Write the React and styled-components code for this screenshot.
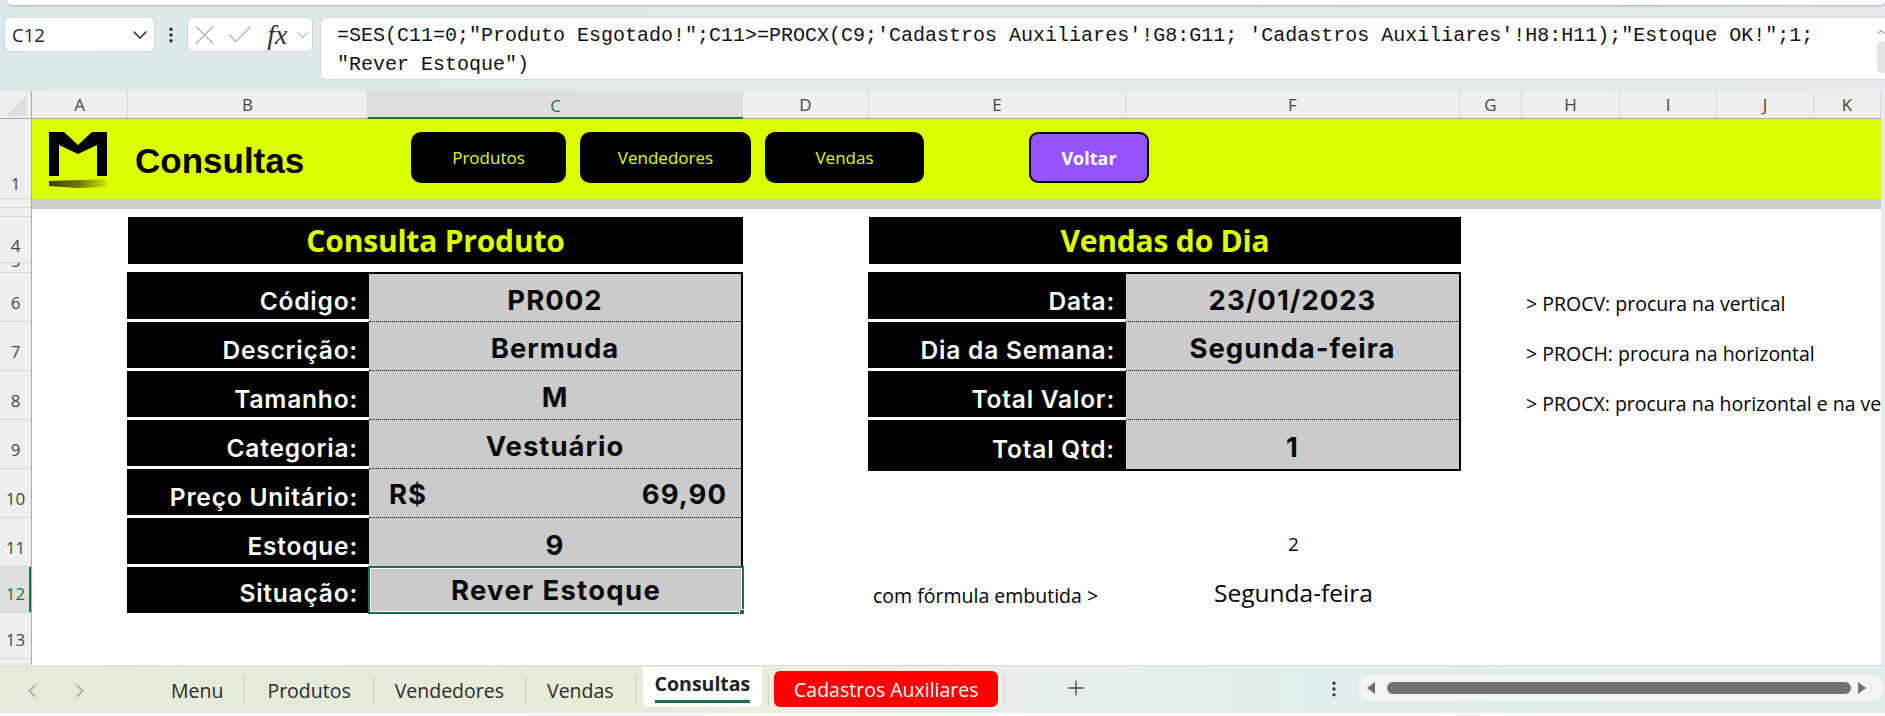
import React from "react";
import styled, { createGlobalStyle } from "styled-components";
import { Check, ChevronDown, ChevronLeft, ChevronRight, ChevronUp, EllipsisVertical, Plus, X } from "lucide-react";

const LIME = "#DCFF00";
const UI_FONT = `"Open Sans", "Noto Sans", sans-serif`;
const DATA_FONT = `Inter, "Open Sans", sans-serif`;
const GREEN = "#1a7244";

const GlobalStyle = createGlobalStyle`
  html, body {
    margin: 0;
    padding: 0;
    background: #fff;
    overflow: hidden;
  }
  * { box-sizing: border-box; }
`;

const Window = styled.div`
  width: 1885px;
  height: 716px;
  display: flex;
  flex-direction: column;
  overflow: hidden;
  font-family: ${UI_FONT};
  background: linear-gradient(90deg, #dce9ea 0%, #e2eaea 60%, #e6ecee 100%);
`;

const RibbonEdge = styled.div`
  height: 5px;
  margin-left: 7px;
  flex: none;
  background: #fff;
  border-radius: 0 0 6px 6px;
  box-shadow: 0 1px 3px rgba(0, 0, 0, 0.25);
`;

const FormulaRow = styled.div`
  display: flex;
  align-items: flex-start;
  height: 86px;
  flex: none;
  padding: 12px 0 0 4px;
`;

const NameBox = styled.div`
  width: 151px;
  height: 35px;
  display: flex;
  align-items: center;
  justify-content: space-between;
  padding: 0 2px 0 7px;
  background: #fff;
  border: 1px solid #d5d8d8;
  border-radius: 6px;
  font-size: 18.5px;
  color: #222;
`;

const DotsSlot = styled.div`
  width: 32px;
  height: 35px;
  display: flex;
  align-items: center;
  justify-content: center;
  color: #333;
`;

const FxBox = styled.div`
  width: 126px;
  height: 35px;
  display: flex;
  align-items: center;
  gap: 3px;
  background: #fff;
  border: 1px solid #d5d8d8;
  border-radius: 6px;
  color: #b8b8b8;
`;

const FxLabel = styled.span`
  font-family: "Liberation Serif", serif;
  font-style: italic;
  font-size: 28px;
  line-height: 30px;
  color: #333;
  margin: 0 2px 0 9px;
`;

const FormulaBox = styled.div`
  position: relative;
  flex: 1;
  height: 63px;
  margin-left: 7px;
  padding: 4px 0 0 16px;
  background: #fff;
  border: 1px solid #d5d8d8;
  border-right: none;
  border-radius: 6px 0 0 6px;
  font-family: "Liberation Mono", monospace;
  font-size: 20px;
  line-height: 28.5px;
  color: #111;
  white-space: pre;
`;

const FormulaScroll = styled.div`
  position: absolute;
  top: 0;
  right: 0;
  width: 8px;
  height: 100%;
  display: flex;
  flex-direction: column;
  align-items: center;
  color: #666;
  padding-top: 8px;
`;

const FormulaThumb = styled.div`
  width: 8px;
  height: 32px;
  margin-top: 3px;
  border-radius: 4px 0 0 4px;
  background: #e6e6e6;
`;

const ColumnBar = styled.div`
  display: flex;
  height: 28px;
  flex: none;
  margin-right: 4px;
  background: #efefef;
  border-bottom: 1px solid #ababab;
`;

const CornerCell = styled.div`
  width: 32px;
  flex: none;
  display: flex;
  align-items: flex-end;
  justify-content: flex-end;
  padding: 0 4px 2px 0;
  border-right: 1px solid #ababab;
`;

const CornerMark = styled.div`
  width: 20px;
  height: 22px;
  background: #dedede;
  clip-path: polygon(100% 0, 100% 100%, 0 100%);
`;

const ColumnCell = styled.div`
  width: ${(p) => p.$w}px;
  flex: none;
  display: flex;
  align-items: center;
  justify-content: center;
  font-size: 17px;
  color: ${(p) => (p.$active ? GREEN : "#454545")};
  background: ${(p) => (p.$active ? "#dfdfdf" : "transparent")};
  border-right: ${(p) => (p.$active ? "none" : "1px solid #d6d6d6")};
  box-shadow: ${(p) => (p.$active ? `inset 0 -2px 0 ${GREEN}` : "none")};
  margin-bottom: ${(p) => (p.$active ? "-1px" : "0")};
`;

const Grid = styled.div`
  flex: 1;
  display: flex;
  min-height: 0;
  margin-right: 4px;
  background: #fff;
`;

const RowHeads = styled.div`
  width: 32px;
  flex: none;
  display: flex;
  flex-direction: column;
  overflow: hidden;
  background: #efefef;
  border-right: 1px solid #ababab;
`;

const RowHead = styled.div`
  height: ${(p) => p.$h}px;
  flex: none;
  display: flex;
  align-items: flex-end;
  justify-content: center;
  overflow: hidden;
  padding-bottom: ${(p) => p.$pb ?? 7}px;
  font-size: 17px;
  line-height: 23px;
  color: ${(p) => (p.$active ? GREEN : "#454545")};
  background: ${(p) => (p.$active ? "#dfdfdf" : "transparent")};
  border-bottom: 1px solid #d6d6d6;
  box-shadow: ${(p) => (p.$active ? `inset -2px 0 0 ${GREEN}` : "none")};
`;

const Sheet = styled.div`
  flex: 1;
  min-width: 0;
  display: flex;
  flex-direction: column;
  overflow: hidden;
`;

const Banner = styled.div`
  height: 80px;
  flex: none;
  display: flex;
  align-items: flex-start;
  background: ${LIME};
  padding: 13px 0 0 17px;
`;

const LogoWrap = styled.div`
  width: 58px;
  flex: none;
`;

const PageTitle = styled.div`
  width: 304px;
  flex: none;
  padding: 9px 0 0 28px;
  font-family: "Liberation Sans", sans-serif;
  font-weight: 700;
  font-size: 35px;
  line-height: 40px;
  color: #000;
`;

const NavButton = styled.div`
  width: ${(p) => p.$w}px;
  height: 51px;
  flex: none;
  margin-right: 14px;
  display: flex;
  align-items: center;
  justify-content: center;
  background: #000;
  border-radius: 10px;
  font-size: 17px;
  color: ${LIME};
`;

const BackButton = styled.div`
  width: 120px;
  height: 51px;
  flex: none;
  margin-left: 91px;
  display: flex;
  align-items: center;
  justify-content: center;
  background: #9455ff;
  border: 2px solid #000;
  border-radius: 9px;
  font-size: 18px;
  font-weight: 700;
  color: #fff;
`;

const GrayBand = styled.div`
  height: 10px;
  flex: none;
  background: #cccccc;
`;

const Content = styled.div`
  flex: 1;
  display: flex;
  padding: 8px 0 0 95px;
`;

const Panel = styled.div`
  width: ${(p) => p.$w}px;
  flex: none;
  margin-right: ${(p) => p.$gap}px;
`;

const PanelTitle = styled.div`
  height: 47px;
  margin: 0 0 8px 1px;
  display: flex;
  align-items: center;
  justify-content: center;
  background: #000;
  font-size: 30px;
  font-weight: 700;
  letter-spacing: -0.2px;
  color: ${LIME};
`;

const DataTable = styled.div`
  border-top: 2px solid #000;
  border-right: 2px solid #000;
  border-bottom: ${(p) => (p.$closed ? "2px solid #000" : "none")};
`;

const DataRow = styled.div`
  display: grid;
  grid-template-columns: ${(p) => p.$label}px 1fr;
  height: ${(p) => p.$h || 49}px;
`;

const LabelCell = styled.div`
  display: flex;
  align-items: flex-end;
  justify-content: flex-end;
  padding: 0 11px ${(p) => (p.$flush ? 5 : 3)}px 0;
  background: #000;
  border-bottom: ${(p) => (p.$flush ? "none" : "3px solid #fff")};
  font-family: ${DATA_FONT};
  font-size: 24.5px;
  font-weight: 600;
  letter-spacing: 0.8px;
  line-height: 30px;
  color: #fff;
`;

const ValueCell = styled.div`
  display: flex;
  align-items: center;
  justify-content: ${(p) => (p.$split ? "space-between" : "center")};
  padding: ${(p) => (p.$split ? "2px 14px 0 20px" : "4px 0 0")};
  background: #cbcbcb;
  border-bottom: ${(p) => (p.$flush ? "none" : "1px dotted #000")};
  font-family: ${DATA_FONT};
  font-size: 27.5px;
  font-weight: 700;
  letter-spacing: 1px;
  color: #0a0a0a;
`;

const SelectedCell = styled(ValueCell)`
  position: relative;
  margin: -1px -3px -1px -1px;
  padding: 0;
  border: 2px solid ${GREEN};
  box-shadow: inset 0 0 0 1px #fff;
  letter-spacing: 1.3px;
`;

const FillHandle = styled.span`
  position: absolute;
  right: -3px;
  bottom: -3px;
  width: 6px;
  height: 6px;
  background: ${GREEN};
  border: 1px solid #fff;
`;

const LooseGrid = styled.div`
  display: grid;
  grid-template-columns: 258px 335px;
  grid-auto-rows: 49px;
  margin-top: 48px;
`;

const LooseCell = styled.div`
  display: flex;
  align-items: center;
  justify-content: ${(p) => (p.$center ? "center" : "flex-start")};
  padding-left: ${(p) => (p.$center ? 0 : 5)}px;
  padding-top: ${(p) => p.$top || 0}px;
  font-size: ${(p) => p.$size}px;
  color: #000;
  white-space: nowrap;
`;

const Notes = styled.div`
  flex: none;
  display: flex;
  flex-direction: column;
  padding-top: 61px;
  white-space: nowrap;
`;

const Note = styled.div`
  height: 50px;
  display: flex;
  align-items: center;
  font-size: 19.5px;
  color: #000;
`;

const TabBar = styled.div`
  height: 48px;
  flex: none;
  display: flex;
  align-items: flex-start;
  background: linear-gradient(90deg, #e3ecdc 0%, #e8ebd8 35%, #f0eedf 42%, #e6eeea 55%, #dfeeee 80%, #e2eeee 100%);
  border-top: 1px solid #dcdfd8;
`;

const BottomEdge = styled.div`
  height: 3px;
  flex: none;
  background: #fbfbfb;
`;

const NavArrows = styled.div`
  width: 150px;
  flex: none;
  display: flex;
  gap: 26px;
  padding: 14px 0 0 21px;
  color: #9a9a9a;
`;

const Tab = styled.div`
  height: 30px;
  margin-top: 9px;
  padding: 0 ${(p) => p.$pad || 21}px;
  flex: none;
  display: flex;
  align-items: center;
  border-right: 1px solid #cfd2c8;
  font-size: 19.5px;
  color: #2b2b2b;
`;

const ActiveTab = styled.div`
  height: 40px;
  margin: 1px 6px 0 7px;
  padding: 0 12px;
  flex: none;
  background: #fff;
  border-radius: 0 0 6px 6px;
  font-size: 19.5px;
  font-weight: 700;
  line-height: 33px;
  color: #222;
`;

const ActiveMark = styled.div`
  height: 3px;
  background: ${GREEN};
`;

const RedTab = styled.div`
  width: 224px;
  height: 36px;
  margin: 5px 6px 0 5px;
  flex: none;
  display: flex;
  align-items: center;
  justify-content: center;
  background: #ff0000;
  border-radius: 6px;
  font-size: 19.5px;
  color: #fff;
`;

const TabDivider = styled.div`
  width: 1px;
  height: 30px;
  margin-top: 9px;
  flex: none;
  background: #cfd2c8;
`;

const AddSheet = styled.div`
  width: 30px;
  margin: 10px 0 0 56px;
  flex: none;
  display: flex;
  justify-content: center;
  color: #444;
`;

const TabDots = styled.div`
  width: 20px;
  margin: 13px 15px 0 233px;
  flex: none;
  display: flex;
  justify-content: center;
  color: #333;
`;

const ScrollTrack = styled.div`
  flex: none;
  width: 524px;
  height: 26px;
  margin-top: 9px;
  display: flex;
  align-items: center;
  justify-content: space-between;
  padding: 0 0 0 8px;
  background: #f3f4f4;
  border-radius: 10px;
`;

const ScrollThumb = styled.div`
  width: 464px;
  height: 12px;
  background: #707070;
  border-radius: 6px;
`;

const ScrollArrow = styled.div`
  width: 0;
  height: 0;
  border-top: 6px solid transparent;
  border-bottom: 6px solid transparent;
  border-${(p) => (p.$left ? "right" : "left")}: 8px solid #707070;
  margin-right: ${(p) => (p.$left ? 4 : 17)}px;
`;

const COLUMNS = [
  ["A", 96], ["B", 240], ["C", 375], ["D", 126], ["E", 257], ["F", 334],
  ["G", 62], ["H", 98], ["I", 97], ["J", 97], ["K", 67],
];

const ROW_HEADS = [
  ["1", 80, 3], ["", 9, 0], ["", 9, 0], ["4", 46, 5], ["5", 10, 0], ["6", 49], ["7", 49], ["8", 49],
  ["9", 49], ["10", 49], ["11", 49], ["12", 46], ["13", 46],
];

const PRODUCT_ROWS = [
  ["Código:", "PR002"],
  ["Descrição:", "Bermuda"],
  ["Tamanho:", "M"],
  ["Categoria:", "Vestuário"],
];

const SALES_ROWS = [
  ["Data:", "23/01/2023"],
  ["Dia da Semana:", "Segunda-feira"],
  ["Total Valor:", ""],
];

const FORMULA = `=SES(C11=0;"Produto Esgotado!";C11>=PROCX(C9;'Cadastros Auxiliares'!G8:G11; 'Cadastros Auxiliares'!H8:H11);"Estoque OK!";1;
"Rever Estoque")`;

function Logo() {
  return (
    <svg width="58" height="57" viewBox="0 0 58 57">
      <defs>
        <linearGradient id="swoosh" x1="0" x2="1" y1="0" y2="0">
          <stop offset="0" stopColor="#3a4000" />
          <stop offset="0.5" stopColor="#6a7500" />
          <stop offset="1" stopColor="#cce600" />
        </linearGradient>
        <filter id="soft" x="-5%" y="-30%" width="110%" height="160%">
          <feGaussianBlur stdDeviation="0.7" />
        </filter>
      </defs>
      <path d="M0 0H15L29 13L43 0H58V44H48V13L29 22L10 13V44H0Z" fill="#000" />
      <path d="M0 49L30 48L57 47V55L28 56L0 54Z" fill="url(#swoosh)" filter="url(#soft)" />
    </svg>
  );
}

export default function App() {
  return (
    <Window>
      <GlobalStyle />
      <RibbonEdge />
      <FormulaRow>
        <NameBox>
          C12
          <ChevronDown size={24} strokeWidth={1.6} color="#333" />
        </NameBox>
        <DotsSlot>
          <EllipsisVertical size={20} strokeWidth={2.2} />
        </DotsSlot>
        <FxBox>
          <X size={34} strokeWidth={1.1} />
          <Check size={32} strokeWidth={1.1} />
          <FxLabel>fx</FxLabel>
          <ChevronDown size={20} strokeWidth={1.4} />
        </FxBox>
        <FormulaBox>
          {FORMULA}
          <FormulaScroll>
            <ChevronUp size={12} />
            <FormulaThumb />
          </FormulaScroll>
        </FormulaBox>
      </FormulaRow>

      <ColumnBar>
        <CornerCell>
          <CornerMark />
        </CornerCell>
        {COLUMNS.map(([name, w]) => (
          <ColumnCell key={name} $w={w} $active={name === "C"}>
            {name}
          </ColumnCell>
        ))}
      </ColumnBar>

      <Grid>
        <RowHeads>
          {ROW_HEADS.map(([name, h, pb], i) => (
            <RowHead key={i} $h={h} $pb={pb} $active={name === "12"}>
              {name}
            </RowHead>
          ))}
        </RowHeads>
        <Sheet>
          <Banner>
            <LogoWrap>
              <Logo />
            </LogoWrap>
            <PageTitle>Consultas</PageTitle>
            <NavButton $w={155}>Produtos</NavButton>
            <NavButton $w={171}>Vendedores</NavButton>
            <NavButton $w={159}>Vendas</NavButton>
            <BackButton>Voltar</BackButton>
          </Banner>
          <GrayBand />
          <Content>
            <Panel $w={616} $gap={125}>
              <PanelTitle>Consulta Produto</PanelTitle>
              <DataTable>
                {PRODUCT_ROWS.map(([label, value], i) => (
                  <DataRow key={label} $label={242} $h={i === 0 ? 48 : 49}>
                    <LabelCell>{label}</LabelCell>
                    <ValueCell>{value}</ValueCell>
                  </DataRow>
                ))}
                <DataRow $label={242}>
                  <LabelCell>Preço Unitário:</LabelCell>
                  <ValueCell $split>
                    <span>R$</span>
                    <span>69,90</span>
                  </ValueCell>
                </DataRow>
                <DataRow $label={242}>
                  <LabelCell>Estoque:</LabelCell>
                  <ValueCell $flush>9</ValueCell>
                </DataRow>
                <DataRow $label={242} $h={46}>
                  <LabelCell $flush>Situação:</LabelCell>
                  <SelectedCell $flush>
                    Rever Estoque
                    <FillHandle />
                  </SelectedCell>
                </DataRow>
              </DataTable>
            </Panel>

            <Panel $w={593} $gap={65}>
              <PanelTitle>Vendas do Dia</PanelTitle>
              <DataTable $closed>
                {SALES_ROWS.map(([label, value], i) => (
                  <DataRow key={label} $label={258} $h={i === 0 ? 48 : 49}>
                    <LabelCell>{label}</LabelCell>
                    <ValueCell>{value}</ValueCell>
                  </DataRow>
                ))}
                <DataRow $label={258}>
                  <LabelCell $flush>Total Qtd:</LabelCell>
                  <ValueCell $flush>1</ValueCell>
                </DataRow>
              </DataTable>
              <LooseGrid>
                <span />
                <LooseCell $center $size={19}>2</LooseCell>
                <LooseCell $size={19.5} $top={6}>com fórmula embutida &gt;</LooseCell>
                <LooseCell $center $size={24.5}>Segunda-feira</LooseCell>
              </LooseGrid>
            </Panel>

            <Notes>
              <Note>&gt; PROCV: procura na vertical</Note>
              <Note>&gt; PROCH: procura na horizontal</Note>
              <Note>&gt; PROCX: procura na horizontal e na vertical</Note>
            </Notes>
          </Content>
        </Sheet>
      </Grid>

      <TabBar>
        <NavArrows>
          <ChevronLeft size={22} strokeWidth={1.3} />
          <ChevronRight size={22} strokeWidth={1.3} />
        </NavArrows>
        <Tab>Menu</Tab>
        <Tab $pad={22}>Produtos</Tab>
        <Tab>Vendedores</Tab>
        <Tab>Vendas</Tab>
        <ActiveTab>
          Consultas
          <ActiveMark />
        </ActiveTab>
        <TabDivider />
        <RedTab>Cadastros Auxiliares</RedTab>
        <TabDivider />
        <AddSheet>
          <Plus size={24} strokeWidth={1.3} />
        </AddSheet>
        <TabDots>
          <EllipsisVertical size={20} strokeWidth={2} />
        </TabDots>
        <ScrollTrack>
          <ScrollArrow $left />
          <ScrollThumb />
          <ScrollArrow />
        </ScrollTrack>
      </TabBar>
      <BottomEdge />
    </Window>
  );
}
